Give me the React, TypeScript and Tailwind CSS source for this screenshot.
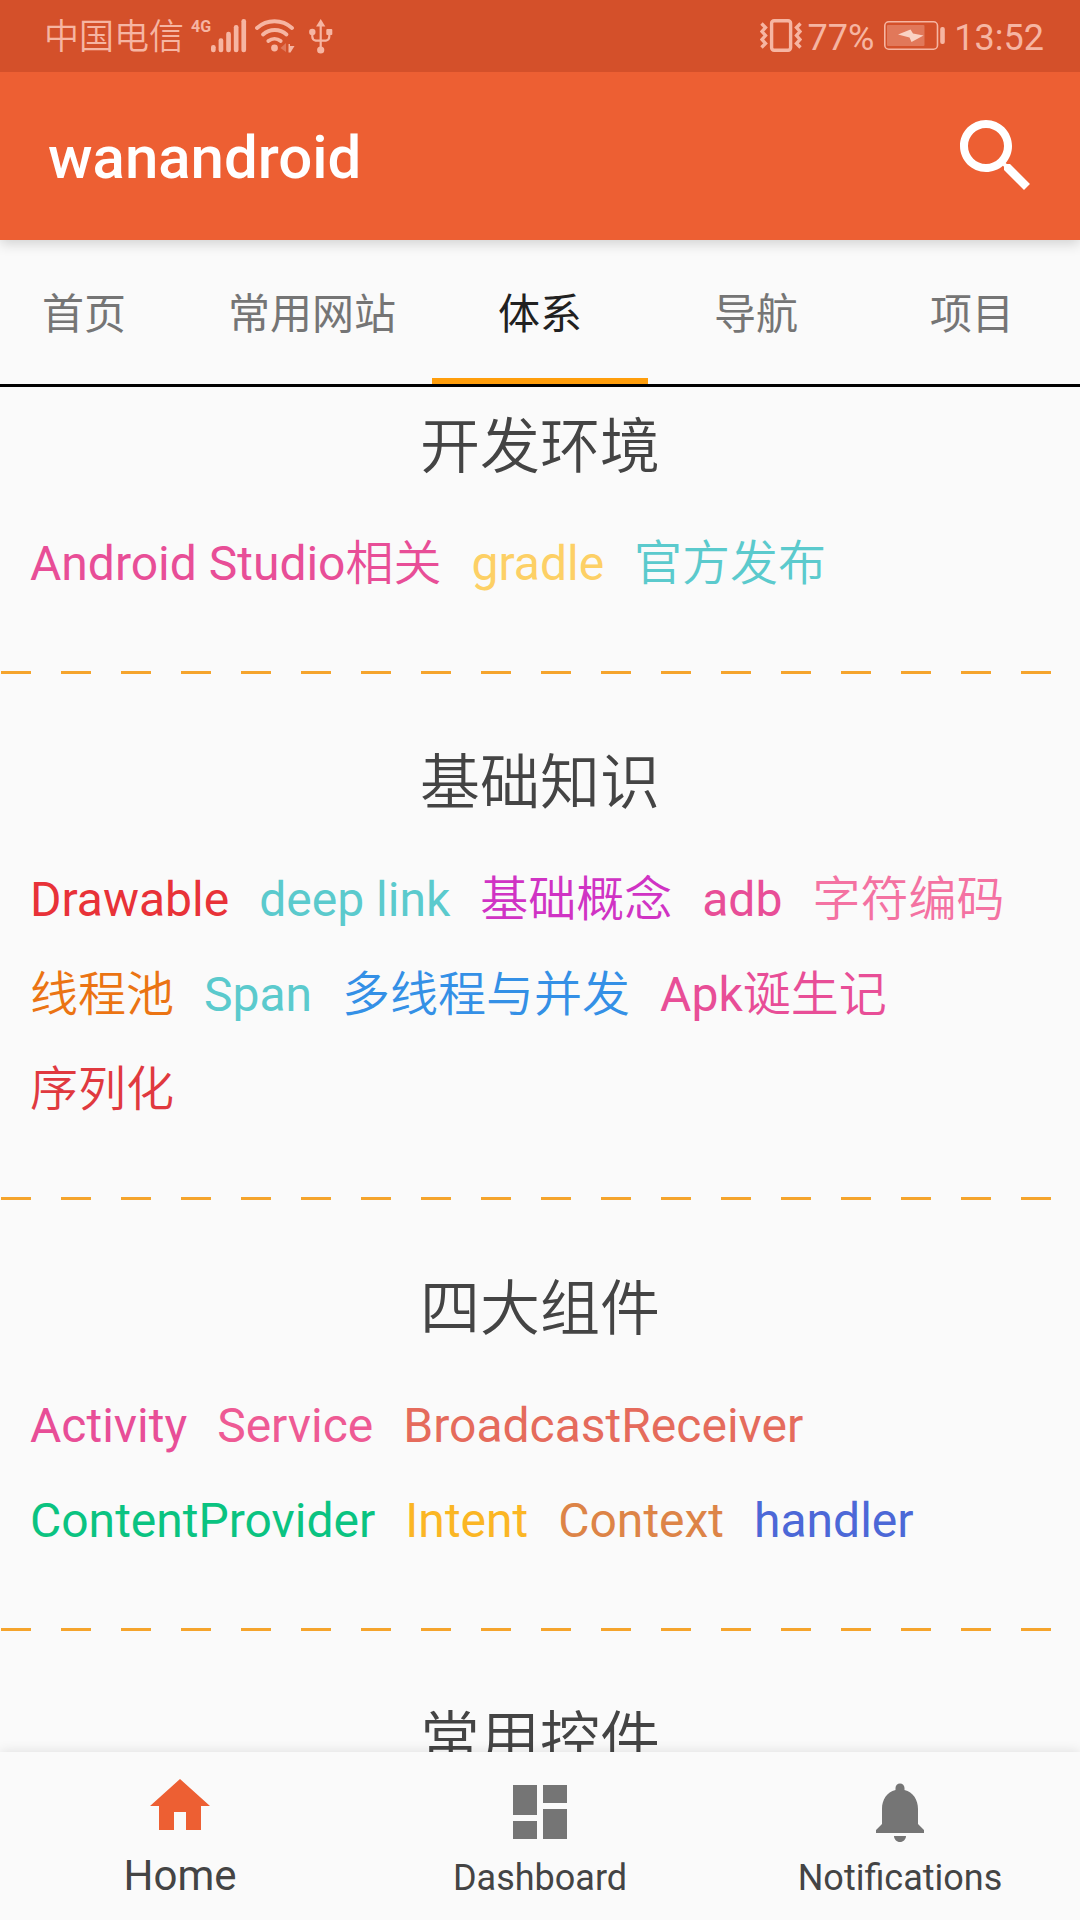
import { useState } from "react";

type Tag = { label: string; color: string };
type Section = { title: string; tags: Tag[] };

const sections: Section[] = [
  {
    title: "开发环境",
    tags: [
      { label: "Android Studio相关", color: "text-[#e84e97]" },
      { label: "gradle", color: "text-[#fdd065]" },
      { label: "官方发布", color: "text-[#5bcacd]" },
    ],
  },
  {
    title: "基础知识",
    tags: [
      { label: "Drawable", color: "text-[#e83238]" },
      { label: "deep link", color: "text-[#5bcacd]" },
      { label: "基础概念", color: "text-[#d033c4]" },
      { label: "adb", color: "text-[#e84e97]" },
      { label: "字符编码", color: "text-[#f472a2]" },
      { label: "线程池", color: "text-[#eb7413]" },
      { label: "Span", color: "text-[#5bcacd]" },
      { label: "多线程与并发", color: "text-[#3490e6]" },
      { label: "Apk诞生记", color: "text-[#e84e97]" },
      { label: "序列化", color: "text-[#e0393f]" },
    ],
  },
  {
    title: "四大组件",
    tags: [
      { label: "Activity", color: "text-[#e84e97]" },
      { label: "Service", color: "text-[#ee5a94]" },
      { label: "BroadcastReceiver", color: "text-[#e56b5c]" },
      { label: "ContentProvider", color: "text-[#0ac381]" },
      { label: "Intent", color: "text-[#fbb624]" },
      { label: "Context", color: "text-[#dd8447]" },
      { label: "handler", color: "text-[#4c68d7]" },
    ],
  },
  { title: "常用控件", tags: [] },
];

const tabs = [
  { name: "首页", pad: "pr-12" },
  { name: "常用网站", pad: "pr-6" },
  { name: "体系", pad: "" },
  { name: "导航", pad: "" },
  { name: "项目", pad: "" },
];

const navItems = [
  { label: "Home", path: "M10 20v-6h4v6h5v-8h3L12 3 2 12h3v8z" },
  {
    label: "Dashboard",
    path: "M3 13h8V3H3v10zm0 8h8v-6H3v6zm10 0h8V11h-8v10zm0-18v6h8V3h-8z",
  },
  {
    label: "Notifications",
    path: "M12 22c1.1 0 2-.9 2-2h-4c0 1.1.89 2 2 2zm6-6v-5c0-3.07-1.64-5.64-4.5-6.32V4c0-.83-.67-1.5-1.5-1.5s-1.5.67-1.5 1.5v.68C7.63 5.36 6 7.92 6 11v5l-2 2v1h16v-1l-2-2z",
  },
];

function SignalIcon() {
  return (
    <svg width="36" height="34" viewBox="0 0 36 34" fill="currentColor" aria-hidden="true">
      <rect x="0" y="26" width="4.7" height="7.3" rx="2.2" />
      <rect x="7.6" y="19.3" width="4.7" height="14" rx="2.2" />
      <rect x="15.2" y="12.7" width="4.7" height="20.6" rx="2.2" />
      <rect x="22.8" y="6" width="4.7" height="27.3" rx="2.2" />
      <rect x="30.4" y="0" width="4.7" height="33.3" rx="2.2" />
    </svg>
  );
}

function WifiIcon() {
  return (
    <svg width="40" height="34" viewBox="0 0 40 34" fill="none" aria-hidden="true">
      <g stroke="currentColor" strokeWidth="3.8" strokeLinecap="round">
        <path d="M2 9A26 26 0 0 1 37 9" />
        <path d="M8 15.5A17.6 17.6 0 0 1 31.5 15.5" />
        <path d="M13.3 22A10 10 0 0 1 25.7 22" />
      </g>
      <circle cx="19.5" cy="29" r="3.4" fill="currentColor" />
      <path d="M25.5 29l5.5-5v9z" fill="currentColor" opacity=".4" />
      <path d="M33.5 25h1.5v2h4.5l-4 6.5h-2z" fill="currentColor" />
    </svg>
  );
}

function UsbIcon() {
  return (
    <svg width="24" height="35" viewBox="0 0 24 35" fill="currentColor" aria-hidden="true">
      <path d="M11.7 0l4.6 7.5H7.1z" />
      <circle cx="11.7" cy="31" r="3.6" />
      <circle cx="3.3" cy="13" r="3.2" />
      <rect x="17.3" y="10" width="6" height="6" rx="1" />
      <path
        d="M11.7 5v25M3.3 13v4.5q0 3.5 3.5 4.2h10q3.5-.7 3.5-4.2V13"
        fill="none"
        stroke="currentColor"
        strokeWidth="2.2"
      />
    </svg>
  );
}

function VibrateIcon() {
  return (
    <svg width="42" height="34" viewBox="0 0 42 34" fill="none" stroke="currentColor" aria-hidden="true">
      <rect x="11.6" y="1.7" width="19" height="29.5" rx="2.5" strokeWidth="3.4" />
      <path
        d="M1.5 4.5l4 4-3.5 4 3.5 4-3.5 4 3.5 4-4 4M40.5 4.5l-4 4 3.5 4-3.5 4 3.5 4-3.5 4 4 4"
        strokeWidth="3.4"
      />
    </svg>
  );
}

function BatteryIcon() {
  return (
    <svg width="62" height="30" viewBox="0 0 62 30" fill="currentColor" aria-hidden="true">
      <rect x=".8" y=".8" width="52.7" height="27.4" rx="4" fill="none" stroke="currentColor" strokeWidth="1.6" />
      <rect x="3" y="4" width="37.5" height="21" rx="1" opacity=".4" />
      <path d="M14 13.5L26.5 8.5 29 12.5 39.5 14.5 27.5 21 25.5 16.5z" fill="#fad3c5" />
      <rect x="56.2" y="6" width="4.6" height="17" rx="2" />
    </svg>
  );
}

function StatusBar() {
  return (
    <div className="relative z-20 flex h-[72px] shrink-0 items-center justify-between bg-[#d4502a] pr-9 pl-11 text-[36px] leading-[42px] text-[#f6b5a2]">
      <div className="flex items-center">
        <span className="pt-1 text-[35px] font-[350]">中国电信</span>
        <span className="ml-[7px] self-start pt-1 text-[16px] leading-[20px] font-bold">4G</span>
        <SignalIcon />
        <span className="ml-2">
          <WifiIcon />
        </span>
        <span className="ml-3.5">
          <UsbIcon />
        </span>
      </div>
      <div className="flex items-center">
        <VibrateIcon />
        <span className="ml-1.5 pt-1">77%</span>
        <span className="mr-2 ml-2.5">
          <BatteryIcon />
        </span>
        <span className="pt-1">13:52</span>
      </div>
    </div>
  );
}

/* Han characters are set a little lighter than the Latin text beside them. */
function MixedText({ text }: { text: string }) {
  const runs = text.match(/[\u4e00-\u9fff]+|[^\u4e00-\u9fff]+/g) ?? [];
  return runs.map((run) =>
    /[\u4e00-\u9fff]/.test(run) ? (
      <span key={run} className="font-[350]">
        {run}
      </span>
    ) : (
      run
    ),
  );
}

function TagSection({ title, tags }: Section) {
  return (
    <section>
      <h2 className="text-center text-[60px] leading-[72px] font-[350] text-[#444444]">{title}</h2>
      <div className="mt-8 flex flex-wrap gap-x-[30px] px-[30px] pb-[60px]">
        {tags.map((tag) => (
          <a
            key={tag.label}
            href="#"
            className={`${tag.color} text-[48px] leading-[95px] whitespace-nowrap`}
          >
            <MixedText text={tag.label} />
          </a>
        ))}
      </div>
      <div className="ml-px h-[3px] bg-[repeating-linear-gradient(90deg,#f5a42c_0_30px,transparent_30px_60px)]" />
    </section>
  );
}

export default function App() {
  const [tab, setTab] = useState("体系");
  const [nav, setNav] = useState("Home");

  return (
    <div className="flex h-screen flex-col overflow-hidden bg-[#fafafa] font-['Roboto','Noto_Sans_CJK_SC',sans-serif]">
      <StatusBar />
      <header className="z-10 flex h-[168px] shrink-0 items-center justify-between bg-[#ed5f33] pr-9 pl-12 text-white shadow-[0_4px_12px_rgba(0,0,0,0.16)]">
        <h1 className="pt-1 text-[60px] leading-[72px] font-medium">wanandroid</h1>
        <button type="button" aria-label="Search">
          <svg width="96" height="96" viewBox="0 0 24 24" fill="currentColor" aria-hidden="true">
            <path d="M15.5 14h-.79l-.28-.27C15.41 12.59 16 11.11 16 9.5 16 5.91 13.09 3 9.5 3S3 5.91 3 9.5 5.91 16 9.5 16c1.61 0 3.09-.59 4.23-1.57l.27.28v.79l5 4.99L20.49 19l-4.99-5zm-6 0C7.01 14 5 11.99 5 9.5S7.01 5 9.5 5 14 7.01 14 9.5 11.99 14 9.5 14z" />
          </svg>
        </button>
      </header>

      <div role="tablist" className="grid h-[147px] shrink-0 grid-cols-5 border-b-[3px] border-[#000000]">
        {tabs.map(({ name, pad }) => (
          <button
            key={name}
            type="button"
            role="tab"
            aria-selected={name === tab}
            onClick={() => setTab(name)}
            className={`border-b-[6px] pt-3 text-center text-[42px] leading-[48px] whitespace-nowrap ${pad} ${
              name === tab ? "border-[#ff9e0c] text-[#212121]" : "border-transparent text-[#757575]"
            }`}
          >
            {name}
          </button>
        ))}
      </div>

      <main className="flex min-h-0 flex-1 flex-col gap-[74px] overflow-y-auto pt-[25px] [scrollbar-width:none]">
        {sections.map((section) => (
          <TagSection key={section.title} {...section} />
        ))}
      </main>

      <nav className="z-10 grid h-[168px] shrink-0 grid-cols-3 bg-[#fafafa] shadow-[0_0_12px_rgba(0,0,0,0.12)]">
        {navItems.map((item) => {
          const active = item.label === nav;
          return (
            <button
              key={item.label}
              type="button"
              aria-current={active ? "page" : undefined}
              onClick={() => setNav(item.label)}
              className="flex flex-col items-center justify-end pb-[18px] text-[#444444]"
            >
              <svg
                width="72"
                height="72"
                viewBox="0 0 24 24"
                fill="currentColor"
                aria-hidden="true"
                className={active ? "text-[#ed5f33]" : "text-[#757575]"}
              >
                <path d={item.path} />
              </svg>
              <span className={active ? "mt-2 text-[42px] leading-[52px]" : "mt-1.5 text-[36px] leading-[48px]"}>
                {item.label}
              </span>
            </button>
          );
        })}
      </nav>
    </div>
  );
}
